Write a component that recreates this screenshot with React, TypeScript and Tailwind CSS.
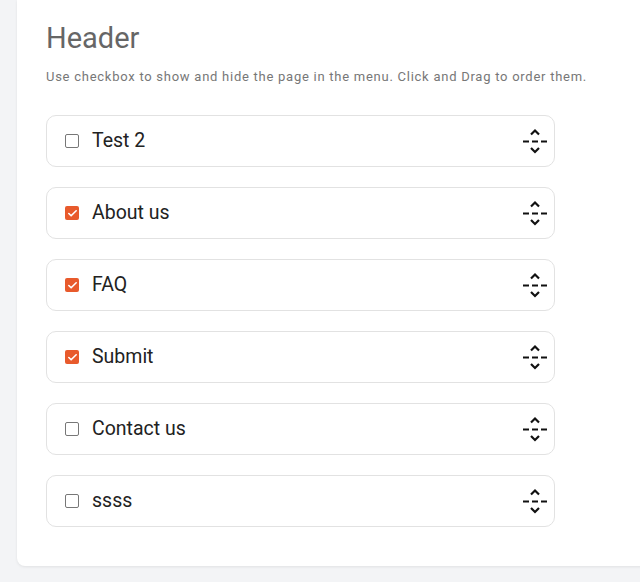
import { Check } from "lucide-react";

const pages = [
  { name: "Test 2", visible: false },
  { name: "About us", visible: true },
  { name: "FAQ", visible: true },
  { name: "Submit", visible: true },
  { name: "Contact us", visible: false },
  { name: "ssss", visible: false },
];

function DragIcon() {
  return (
    <svg width="28" height="28" viewBox="0 0 28 28" fill="none" stroke="#111" strokeWidth="2.2">
      <path d="M10 7.5 L14 3.5 L18 7.5" />
      <path d="M2 14.5 H8 M11 14.5 H17 M20 14.5 H26" />
      <path d="M10 21 L14 25 L18 21" />
    </svg>
  );
}

export default function App() {
  return (
    <div className="min-h-[582px] w-full bg-[#f3f4f6] pl-[17px] pb-4 font-['Roboto',sans-serif] overflow-hidden">
      <div className="bg-white rounded-bl-lg shadow-[0_1px_3px_rgba(0,0,0,0.08)] mr-[-20px] pl-[29px] pt-[21px] pb-[39px]">
        <h1 className="text-[29px] leading-[34px] text-[#666666]">Header</h1>
        <p className="mt-[14px] text-[13px] leading-[16px] tracking-[0.74px] text-[#777777]">
          Use checkbox to show and hide the page in the menu. Click and Drag to order them.
        </p>
        <div className="mt-[30px] flex flex-col gap-[20px] w-[509px]">
          {pages.map((page) => (
            <div
              key={page.name}
              className="h-[52px] flex items-center border border-[#e2e2e2] rounded-[10px] pl-[18px] pr-[5px]"
            >
              {page.visible ? (
                <span className="w-[14px] h-[14px] rounded-[2px] bg-[#e85a2c] flex items-center justify-center">
                  <Check className="w-[11px] h-[11px] text-white" strokeWidth={3.5} />
                </span>
              ) : (
                <span className="w-[14px] h-[14px] rounded-[2px] border border-[#777777] bg-white" />
              )}
              <span className="ml-[13px] text-[19.5px] text-[#222222] flex-1">{page.name}</span>
              <DragIcon />
            </div>
          ))}
        </div>
      </div>
    </div>
  );
}
